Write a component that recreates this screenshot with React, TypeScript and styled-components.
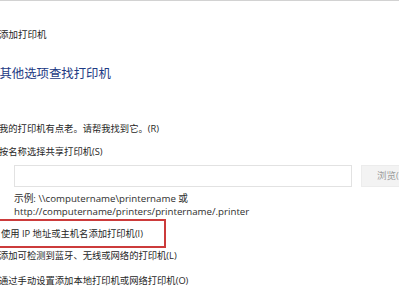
import styled, { createGlobalStyle } from "styled-components";

const GlobalStyle = createGlobalStyle`
  html, body {
    margin: 0;
    padding: 0;
    background: #ffffff;
  }
  body {
    font-family: "Open Sans", "Noto Sans CJK SC", sans-serif;
    color: #262626;
    -webkit-font-smoothing: antialiased;
  }
`;

const options = [
  { id: "old", label: "我的打印机有点老。请帮我找到它。(R)" },
  { id: "share", label: "按名称选择共享打印机(S)" },
];

const lowerOptions = [
  { id: "bt", label: "添加可检测到蓝牙、无线或网络的打印机(L)" },
  { id: "local", label: "通过手动设置添加本地打印机或网络打印机(O)" },
];

const App = () => {
  return (
    <>
      <GlobalStyle />
      <Window>
        <Title>添加打印机</Title>
        <Heading>按其他选项查找打印机</Heading>
        <OptionList>
          {options.map((opt) => (
            <Option key={opt.id}>{opt.label}</Option>
          ))}
        </OptionList>
        <InputRow>
          <PathInput />
          <BrowseButton>浏览(R)...</BrowseButton>
        </InputRow>
        <Example>
          <div>示例: \\computername\printername 或</div>
          <div>http://computername/printers/printername/.printer</div>
        </Example>
        <Highlight>
          <Option>使用 IP 地址或主机名添加打印机(I)</Option>
        </Highlight>
        <LowerList>
          {lowerOptions.map((opt) => (
            <Option key={opt.id}>{opt.label}</Option>
          ))}
        </LowerList>
      </Window>
    </>
  );
};

export default App;

const Window = styled.div`
  width: 399px;
  height: 300px;
  overflow: hidden;
  border-top: 1px solid #d2d2d2;
  box-sizing: border-box;
  display: flex;
  flex-direction: column;
`;

const Title = styled.div`
  margin: 27px 0 0 -1px;
  font-size: 9.5px;
  line-height: 14px;
  white-space: nowrap;
`;

const Heading = styled.div`
  margin: 23px 0 0 -13px;
  font-size: 12.4px;
  line-height: 18px;
  color: #1d3a84;
  white-space: nowrap;
`;

const OptionList = styled.div`
  margin: 39px 0 0 -1px;
  display: flex;
  flex-direction: column;
  gap: 9px;
`;

const Option = styled.div`
  font-size: 9.3px;
  line-height: 14px;
  white-space: nowrap;
`;

const InputRow = styled.div`
  margin: 6px 0 0 14px;
  display: flex;
  gap: 9px;
`;

const PathInput = styled.div`
  width: 338px;
  height: 22px;
  box-sizing: border-box;
  border: 1px solid #e2e2e2;
  flex-shrink: 0;
`;

const BrowseButton = styled.div`
  width: 76px;
  height: 22px;
  flex-shrink: 0;
  box-sizing: border-box;
  padding-left: 15px;
  background: #f3f3f3;
  border: 1px solid #ececec;
  color: #9b9b9b;
  font-size: 9.5px;
  line-height: 20px;
  white-space: nowrap;
`;

const Example = styled.div`
  margin: 6px 0 0 14px;
  font-size: 9.7px;
  line-height: 12.5px;
  color: #2e2e2e;
  white-space: nowrap;
`;

const Highlight = styled.div`
  margin: 1px 0 0 -6px;
  width: 172px;
  height: 29px;
  box-sizing: border-box;
  border: 2px solid #cc3b3b;
  padding-left: 5px;
  display: flex;
  align-items: center;
`;

const LowerList = styled.div`
  margin: 1px 0 0 -1px;
  display: flex;
  flex-direction: column;
  gap: 11px;
`;
